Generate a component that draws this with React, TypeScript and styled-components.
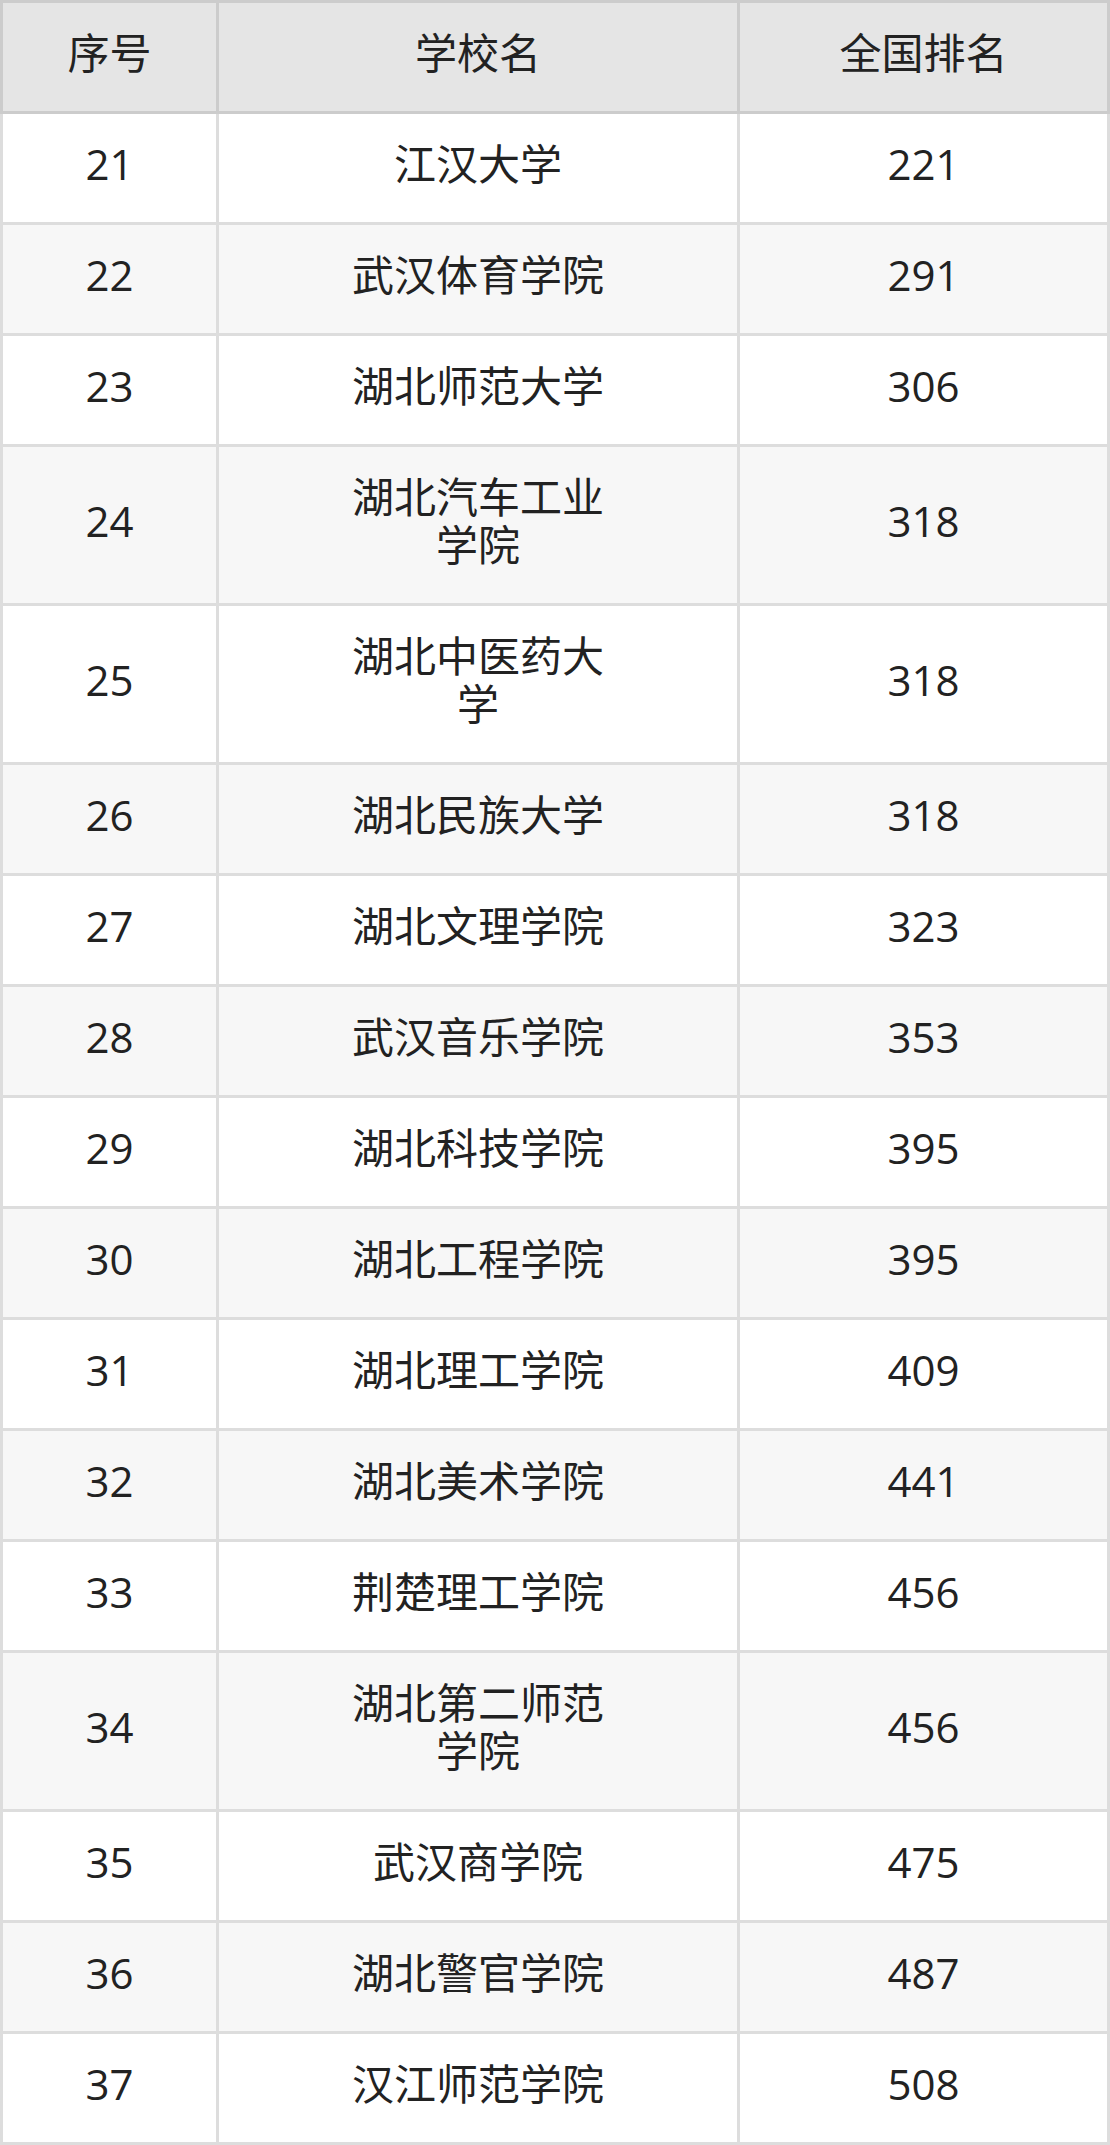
import React from 'react';
import styled, { createGlobalStyle } from 'styled-components';

const GlobalStyle = createGlobalStyle`
  html, body {
    margin: 0;
    padding: 0;
    background: #ffffff;
  }
  body {
    font-family: 'Open Sans', 'Noto Sans CJK SC', sans-serif;
    color: #222222;
  }
`;

const rows = [
  { no: 21, name: '江汉大学', rank: 221 },
  { no: 22, name: '武汉体育学院', rank: 291 },
  { no: 23, name: '湖北师范大学', rank: 306 },
  { no: 24, name: '湖北汽车工业学院', rank: 318 },
  { no: 25, name: '湖北中医药大学', rank: 318 },
  { no: 26, name: '湖北民族大学', rank: 318 },
  { no: 27, name: '湖北文理学院', rank: 323 },
  { no: 28, name: '武汉音乐学院', rank: 353 },
  { no: 29, name: '湖北科技学院', rank: 395 },
  { no: 30, name: '湖北工程学院', rank: 395 },
  { no: 31, name: '湖北理工学院', rank: 409 },
  { no: 32, name: '湖北美术学院', rank: 441 },
  { no: 33, name: '荆楚理工学院', rank: 456 },
  { no: 34, name: '湖北第二师范学院', rank: 456 },
  { no: 35, name: '武汉商学院', rank: 475 },
  { no: 36, name: '湖北警官学院', rank: 487 },
  { no: 37, name: '汉江师范学院', rank: 508 },
];

const App = () => {
  return (
    <>
      <GlobalStyle />
      <Table>
        <HeadGrid>
          <HeadCell>序号</HeadCell>
          <HeadCell>学校名</HeadCell>
          <HeadCell>全国排名</HeadCell>
        </HeadGrid>
        <BodyGrid>
          {rows.map((r, i) => (
            <React.Fragment key={r.no}>
              <Cell $striped={i % 2 === 1}>{r.no}</Cell>
              <Cell $striped={i % 2 === 1}>
                <NameText>{r.name}</NameText>
              </Cell>
              <Cell $striped={i % 2 === 1}>{r.rank}</Cell>
            </React.Fragment>
          ))}
        </BodyGrid>
      </Table>
    </>
  );
};

export default App;

const Table = styled.div`
  width: 1110px;
  display: flex;
  flex-direction: column;
`;

const HeadGrid = styled.div`
  display: grid;
  grid-template-columns: 213px 518px 367px;
  gap: 3px;
  padding: 3px;
  background: #cccccc;
`;

const BodyGrid = styled.div`
  display: grid;
  grid-template-columns: 213px 518px 367px;
  gap: 3px;
  padding: 0 3px 3px;
  background: #dddddd;
`;

const CellBase = styled.div`
  display: flex;
  align-items: center;
  justify-content: center;
  text-align: center;
  padding: 26px 10px 34px;
  font-size: 42px;
  line-height: 48px;
  box-sizing: border-box;
  min-height: 108px;
`;

const HeadCell = styled(CellBase)`
  background: #e5e5e5;
`;

const Cell = styled(CellBase)<{ $striped: boolean }>`
  background: ${(p) => (p.$striped ? '#f7f7f7' : '#ffffff')};
`;

const NameText = styled.span`
  display: block;
  max-width: 264px;
`;
